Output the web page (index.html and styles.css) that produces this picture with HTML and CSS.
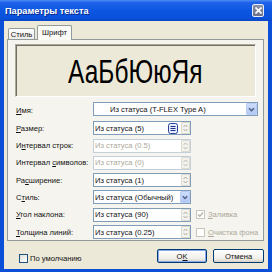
FILE: index.html
```html
<!DOCTYPE html>
<html lang="ru">
<head>
    <meta charset="UTF-8">
    <title>Параметры текста</title>
    <link rel="stylesheet" href="styles.css">
</head>
<body>
    <div class="window">
        <div class="titlebar">
            <span class="title">Параметры текста</span>
            <span class="close-btn">
                <svg width="7" height="7" viewBox="0 0 7 7"><path d="M0.5 0.5L6.5 6.5M6.5 0.5L0.5 6.5" stroke="#fff" stroke-width="1.6"/></svg>
            </span>
        </div>
        <div class="client">
            <div class="tabs">
                <div class="tab tab-style">Стиль</div>
                <div class="tab tab-font active">Шрифт</div>
            </div>
            <div class="panel">
                <div class="preview"><span class="sample">АаБбЮюЯя</span></div>
                <div class="form">
                    <span class="lbl"><u>И</u>мя:</span>
                    <div class="field combo wide name-row">
                        <span class="value centered">Из статуса (T-FLEX Type A)</span>
                        <span class="drop"><svg width="9" height="9" viewBox="0 0 9 9"><path d="M2 3.2L4.5 5.7L7 3.2" fill="none" stroke="#4D6185" stroke-width="1.6"/></svg></span>
                    </div>

                    <span class="lbl"><u>Р</u>азмер:</span>
                    <div class="field">
                        <span class="value short">Из статуса (5)</span>
                        <span class="list-btn"><svg width="10" height="11" viewBox="0 0 10 11"><rect x="0.5" y="0.5" width="9" height="10" rx="2" fill="#E6ECFB" stroke="#26409C"/><path d="M2.5 3.5h5M2.5 5.5h5M2.5 7.5h5" stroke="#1C2F8C"/></svg></span>
                        <span class="spin spin-gap"><svg width="7" height="10" viewBox="0 0 7 10"><path d="M1.5 4L3.5 2L5.5 4M1.5 6L3.5 8L5.5 6" fill="none" stroke="#A9A9A9"/></svg></span>
                    </div>
                    <span></span>

                    <span class="lbl">И<u>н</u>тервал строк:</span>
                    <div class="field disabled">
                        <span class="value">Из статуса (0.5)</span>
                        <span class="spin"><svg width="7" height="10" viewBox="0 0 7 10"><path d="M1.5 4L3.5 2L5.5 4M1.5 6L3.5 8L5.5 6" fill="none" stroke="#B8B8B8"/></svg></span>
                    </div>
                    <span></span>

                    <span class="lbl">Интервал <u>с</u>имволов:</span>
                    <div class="field disabled">
                        <span class="value">Из статуса (0)</span>
                        <span class="spin"><svg width="7" height="10" viewBox="0 0 7 10"><path d="M1.5 4L3.5 2L5.5 4M1.5 6L3.5 8L5.5 6" fill="none" stroke="#B8B8B8"/></svg></span>
                    </div>
                    <span></span>

                    <span class="lbl">Ра<u>с</u>ширение:</span>
                    <div class="field">
                        <span class="value">Из статуса (1)</span>
                        <span class="spin"><svg width="7" height="10" viewBox="0 0 7 10"><path d="M1.5 4L3.5 2L5.5 4M1.5 6L3.5 8L5.5 6" fill="none" stroke="#A9A9A9"/></svg></span>
                    </div>
                    <span></span>

                    <span class="lbl">С<u>т</u>иль:</span>
                    <div class="field combo">
                        <span class="value">Из статуса (Обычный)</span>
                        <span class="drop"><svg width="9" height="9" viewBox="0 0 9 9"><path d="M2 3.2L4.5 5.7L7 3.2" fill="none" stroke="#4D6185" stroke-width="1.6"/></svg></span>
                    </div>
                    <span></span>

                    <span class="lbl"><u>У</u>гол наклона:</span>
                    <div class="field">
                        <span class="value">Из статуса (90)</span>
                        <span class="spin"><svg width="7" height="10" viewBox="0 0 7 10"><path d="M1.5 4L3.5 2L5.5 4M1.5 6L3.5 8L5.5 6" fill="none" stroke="#A9A9A9"/></svg></span>
                    </div>
                    <label class="check disabled">
                        <span class="box"><svg width="7" height="7" viewBox="0 0 7 7"><path d="M1 3.5L2.8 5.3L6 1.5" fill="none" stroke="#B3B1A5" stroke-width="1.3"/></svg></span>
                        <span><u>З</u>аливка</span>
                    </label>

                    <span class="lbl"><u>Т</u>олщина линий:</span>
                    <div class="field">
                        <span class="value">Из статуса (0.25)</span>
                        <span class="spin"><svg width="7" height="10" viewBox="0 0 7 10"><path d="M1.5 4L3.5 2L5.5 4M1.5 6L3.5 8L5.5 6" fill="none" stroke="#A9A9A9"/></svg></span>
                    </div>
                    <label class="check disabled">
                        <span class="box"></span>
                        <span><u>О</u>чистка фона</span>
                    </label>
                </div>
            </div>
            <div class="footer">
                <label class="check default-check">
                    <span class="box"></span>
                    <span>По умолчанию</span>
                </label>
                <div class="buttons">
                    <button class="btn default">O<u>K</u></button>
                    <button class="btn">Отмена</button>
                </div>
            </div>
        </div>
    </div>
</body>
</html>
```

FILE: styles.css
```css
* {
    box-sizing: border-box;
}
body {
    margin: 0;
    width: 272px;
    height: 272px;
    overflow: hidden;
    font-family: "Liberation Sans", Arial, sans-serif;
    font-size: 7.6px;
    color: #111;
}
u {
    text-decoration-thickness: 1px;
    text-underline-offset: 1px;
}
.window {
    width: 272px;
    height: 272px;
    display: flex;
    flex-direction: column;
    background: #0B4FD8;
}
.titlebar {
    height: 21px;
    display: flex;
    align-items: center;
    justify-content: space-between;
    padding: 0 8px 0 5px;
    background: linear-gradient(to bottom, #4E8DF4 0%, #1E63E8 12%, #0B56E2 50%, #0A51DB 85%, #0A47C6 100%);
}
.title {
    color: #fff;
    font-weight: bold;
    font-size: 9.2px;
    text-shadow: 1px 1px 0 #0C2A86;
}
.close-btn {
    width: 12px;
    height: 13px;
    border: 1px solid #E8ECF6;
    border-radius: 2px;
    background: linear-gradient(#8C93A8, #6A7189);
    display: flex;
    align-items: center;
    justify-content: center;
}
.client {
    flex: 1;
    margin: 0 4px 3px 4px;
    background: #ECE9D8;
    padding: 4px 4px 0 3px;
    display: flex;
    flex-direction: column;
}
.tabs {
    display: flex;
    align-items: flex-end;
    height: 14px;
    padding-left: 1px;
}
.tab {
    height: 11px;
    border: 1px solid #919B9C;
    border-bottom: none;
    border-radius: 2px 2px 0 0;
    background: linear-gradient(#FFFFFF, #ECEBE6);
    display: flex;
    align-items: center;
    justify-content: center;
}
.tab-style {
    width: 27px;
    margin-right: 2px;
}
.tab-font {
    width: 35px;
}
.tab.active {
    height: 15px;
    margin-bottom: -1px;
    padding-bottom: 2px;
    background: #FAFAF7;
    position: relative;
    z-index: 1;
}
.panel {
    height: 202px;
    border: 1px solid #919B9C;
    background: #F5F4EE;
    padding: 4px 7px 0 7px;
}
.preview {
    height: 53px;
    border: 1px solid;
    border-color: #ACA899 #FFFFFF #FFFFFF #ACA899;
    box-shadow: inset 1px 1px 0 #716F64;
    background: #ECE9D8;
    display: flex;
    align-items: center;
    justify-content: center;
}
.sample {
    display: inline-block;
    font-size: 34px;
    line-height: 1;
    color: #000;
    transform: scaleX(0.72);
}
.form {
    margin-top: 5px;
    padding-left: 1px;
    display: grid;
    grid-template-columns: 77px 98px 1fr;
    row-gap: 3.3px;
}
.lbl {
    align-self: center;
    white-space: nowrap;
}
.field {
    height: 14px;
    border: 1px solid #7F9DB9;
    background: #fff;
    display: flex;
    align-items: center;
}
.wide {
    grid-column: 2 / 4;
}
.name-row {
    margin-bottom: 2px;
}
.value {
    flex: 1;
    padding-left: 1px;
    white-space: nowrap;
    overflow: hidden;
}
.value.short {
    flex: 0 0 72px;
}
.value.centered {
    padding-left: 16px;
}
.field.disabled {
    border-color: #C3D0DC;
    color: #ACA899;
}
.spin {
    width: 9px;
    height: 12px;
    background: #F3F2EC;
    border: 1px solid #DDDBD0;
    border-radius: 1px;
    display: flex;
    align-items: center;
    justify-content: center;
}
.spin-gap {
    margin-left: 3px;
}
.list-btn {
    width: 10px;
    height: 11px;
    margin-left: 2px;
    display: flex;
}
.drop {
    width: 11px;
    height: 12px;
    background: linear-gradient(#CCDCFC, #B2C7F4);
    border: 1px solid #BBCDF3;
    border-radius: 1px;
    display: flex;
    align-items: center;
    justify-content: center;
}
.field.combo:not(.wide) .drop {
    width: 10px;
}
.check {
    display: flex;
    align-items: center;
    gap: 3px;
    white-space: nowrap;
}
.check.disabled {
    padding-left: 5px;
    color: #ACA899;
}
.check .box {
    width: 9px;
    height: 9px;
    border: 1px solid #C9C7BA;
    background: #fff;
    display: flex;
    align-items: center;
    justify-content: center;
}
.footer {
    flex: 1;
    display: flex;
    justify-content: space-between;
    align-items: flex-start;
    padding: 8px 0 0 12px;
}
.default-check {
    margin-top: 5px;
    gap: 2px;
}
.default-check .box {
    border-color: #1C5180;
    background: linear-gradient(135deg, #DCDCD7, #FFFFFF);
}
.buttons {
    display: flex;
    gap: 6px;
}
.btn {
    width: 51px;
    height: 14px;
    padding: 0;
    border: 1px solid #003C74;
    border-radius: 2px;
    background: linear-gradient(#FFFFFF, #F0EFEA 70%, #D8D2C6);
    font-family: inherit;
    font-size: 7.6px;
    color: #111;
}
.btn.default {
    width: 50px;
    box-shadow: inset 0 0 0 1px #8CA9EC;
}
```
